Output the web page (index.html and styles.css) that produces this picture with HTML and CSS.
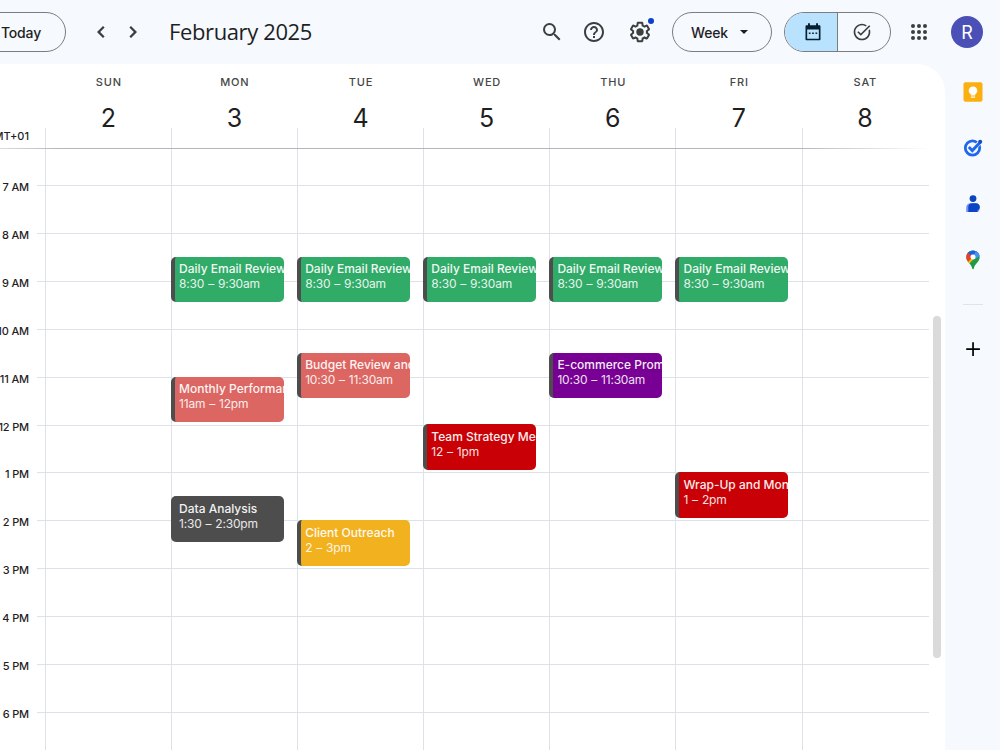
FILE: index.html
```
<!DOCTYPE html>
<html lang="en">
<head>
    <meta charset="UTF-8">
    <meta name="viewport" content="width=device-width, initial-scale=1.0">
    <title>Calendar - Week of February 2, 2025</title>
    <link rel="stylesheet" href="styles.css">
</head>
<body>
    <header class="topbar">
        <button type="button" class="pill today">Today</button>
        <button type="button" class="icon-button prev" aria-label="Previous week">
            <svg width="24" height="24" viewBox="0 0 24 24"><path d="M15.600 7.600 14 6l-6 6 6 6 1.600-1.600L11.200 12z"/></svg>
        </button>
        <button type="button" class="icon-button next" aria-label="Next week">
            <svg width="24" height="24" viewBox="0 0 24 24"><path d="M10 6 8.400 7.600l4.400 4.400-4.400 4.400L10 18l6-6z"/></svg>
        </button>
        <h1>February 2025</h1>

        <button type="button" class="icon-button search" aria-label="Search">
            <svg width="24" height="24" viewBox="0 0 24 24"><path d="M15.5 14h-.79l-.28-.27A6.47 6.47 0 0 0 16 9.5 6.5 6.5 0 1 0 9.5 16c1.61 0 3.09-.59 4.23-1.57l.27.28v.79l5 4.99L20.49 19l-4.99-5zm-6 0C7.01 14 5 11.99 5 9.5S7.01 5 9.5 5 14 7.01 14 9.5 11.99 14 9.5 14z"/></svg>
        </button>
        <button type="button" class="icon-button help" aria-label="Help">
            <svg width="24" height="24" viewBox="0 0 24 24"><path d="M11 18h2v-2h-2v2zm1-16C6.48 2 2 6.48 2 12s4.48 10 10 10 10-4.48 10-10S17.52 2 12 2zm0 18c-4.41 0-8-3.59-8-8s3.59-8 8-8 8 3.59 8 8-3.59 8-8 8zm0-14c-2.21 0-4 1.79-4 4h2c0-1.1.9-2 2-2s2 .9 2 2c0 2-3 1.75-3 5h2c0-2.25 3-2.5 3-5 0-2.21-1.79-4-4-4z"/></svg>
        </button>
        <button type="button" class="icon-button settings" aria-label="Settings">
            <svg width="24" height="24" viewBox="0 0 24 24"><path d="M13.85 22.25h-3.7c-.74 0-1.36-.54-1.45-1.27l-.27-1.89c-.27-.14-.53-.29-.79-.46l-1.8.72c-.7.26-1.47-.03-1.81-.65L2.2 15.53c-.35-.66-.2-1.44.36-1.88l1.53-1.19c-.01-.15-.02-.3-.02-.46s.01-.31.02-.46l-1.52-1.19c-.59-.45-.74-1.26-.37-1.88l1.85-3.19c.34-.62 1.11-.9 1.79-.63l1.81.73c.26-.17.52-.32.78-.46l.27-1.91c.09-.7.71-1.25 1.44-1.25h3.7c.74 0 1.36.54 1.45 1.27l.27 1.89c.27.14.53.29.79.46l1.8-.72c.71-.26 1.48.03 1.82.65l1.84 3.18c.36.66.2 1.44-.36 1.88l-1.52 1.19c.01.15.02.3.02.46s-.01.31-.02.46l1.52 1.19c.56.45.72 1.23.37 1.86l-1.86 3.22c-.34.62-1.11.9-1.8.63l-1.8-.72c-.26.17-.52.32-.78.46l-.27 1.91c-.1.68-.72 1.22-1.46 1.22zm-3.23-2h2.76l.37-2.55.53-.22c.44-.18.88-.44 1.34-.78l.45-.34 2.38.96 1.38-2.4-2.03-1.58.07-.56c.03-.26.06-.51.06-.78s-.03-.53-.06-.78l-.07-.56 2.03-1.58-1.39-2.4-2.39.96-.45-.35c-.42-.32-.87-.58-1.33-.77l-.52-.22-.37-2.55h-2.76l-.37 2.55-.53.21c-.44.19-.88.44-1.34.79l-.45.33-2.38-.95-1.39 2.39 2.03 1.58-.07.56a7 7 0 0 0-.06.79c0 .26.02.53.06.78l.07.56-2.03 1.58 1.38 2.4 2.39-.96.45.35c.43.33.86.58 1.33.77l.53.22.38 2.55z"/><circle cx="12" cy="12" r="3.7"/></svg>
            <span class="dot"></span>
        </button>
        <button type="button" class="pill view-select">Week <span class="caret"></span></button>
        <div class="switch">
            <button type="button" class="active" aria-label="Calendar">
                <svg width="20" height="20" viewBox="0 0 24 24"><path fill-rule="evenodd" d="M6 1.500h2.300V4h7.400V1.500H18V4h1.600c.8 0 1.400.6 1.400 1.400v15.200c0 .8-.6 1.400-1.400 1.400H4.400C3.600 22 3 21.400 3 20.600V5.400C3 4.600 3.600 4 4.400 4H6zM5 9v11h14V9zM7 12.500h2v2H7zM11 12.500h2v2h-2zM15 12.500h2v2h-2z"/></svg>
            </button>
            <button type="button" aria-label="Tasks">
                <svg width="20" height="20" viewBox="0 0 24 24"><path d="M22 5.180 10.590 16.600l-4.240-4.240 1.410-1.410 2.830 2.830 10-10zM19.790 10.220c.13.570.21 1.170.21 1.780 0 4.420-3.580 8-8 8s-8-3.580-8-8 3.580-8 8-8c1.580 0 3.040.46 4.280 1.250l1.440-1.440A9.900 9.900 0 0 0 12 2C6.480 2 2 6.480 2 12s4.480 10 10 10 10-4.480 10-10c0-1.190-.22-2.330-.6-3.390z"/></svg>
            </button>
        </div>
        <button type="button" class="icon-button apps" aria-label="Apps">
            <svg width="24" height="24" viewBox="0 0 24 24">
                <circle cx="6" cy="6" r="2"/><circle cx="12" cy="6" r="2"/><circle cx="18" cy="6" r="2"/>
                <circle cx="6" cy="12" r="2"/><circle cx="12" cy="12" r="2"/><circle cx="18" cy="12" r="2"/>
                <circle cx="6" cy="18" r="2"/><circle cx="12" cy="18" r="2"/><circle cx="18" cy="18" r="2"/>
            </svg>
        </button>
        <div class="avatar">R</div>
    </header>

    <div class="main">
        <main class="calendar">
            <div class="week-header">
                <div class="timezone"><span>GMT+01</span></div>
                <div class="day-head"><span class="name">SUN</span><span class="num">2</span></div>
                <div class="day-head"><span class="name">MON</span><span class="num">3</span></div>
                <div class="day-head"><span class="name">TUE</span><span class="num">4</span></div>
                <div class="day-head"><span class="name">WED</span><span class="num">5</span></div>
                <div class="day-head"><span class="name">THU</span><span class="num">6</span></div>
                <div class="day-head"><span class="name">FRI</span><span class="num">7</span></div>
                <div class="day-head"><span class="name">SAT</span><span class="num">8</span></div>
            </div>
            <div class="header-line"></div>

            <div class="scroller">
                <div class="week">
                    <div class="hours">
                        <div class="hour"><span>7 AM</span></div>
                        <div class="hour"><span>8 AM</span></div>
                        <div class="hour"><span>9 AM</span></div>
                        <div class="hour"><span>10 AM</span></div>
                        <div class="hour"><span>11 AM</span></div>
                        <div class="hour"><span>12 PM</span></div>
                        <div class="hour"><span>1 PM</span></div>
                        <div class="hour"><span>2 PM</span></div>
                        <div class="hour"><span>3 PM</span></div>
                        <div class="hour"><span>4 PM</span></div>
                        <div class="hour"><span>5 PM</span></div>
                        <div class="hour"><span>6 PM</span></div>
                    </div>
                    <div class="days">
                        <div class="day"></div>
                        <div class="day">
                            <div class="event green at-0830"><b>Daily Email Review</b><span>8:30 – 9:30am</span></div>
                            <div class="event coral at-1100"><b>Monthly Performance</b><span>11am – 12pm</span></div>
                            <div class="event gray at-1330"><b>Data Analysis</b><span>1:30 – 2:30pm</span></div>
                        </div>
                        <div class="day">
                            <div class="event green at-0830"><b>Daily Email Review</b><span>8:30 – 9:30am</span></div>
                            <div class="event coral at-1030"><b>Budget Review and</b><span>10:30 – 11:30am</span></div>
                            <div class="event yellow at-1400"><b>Client Outreach</b><span>2 – 3pm</span></div>
                        </div>
                        <div class="day">
                            <div class="event green at-0830"><b>Daily Email Review</b><span>8:30 – 9:30am</span></div>
                            <div class="event red at-1200"><b>Team Strategy Meeting</b><span>12 – 1pm</span></div>
                        </div>
                        <div class="day">
                            <div class="event green at-0830"><b>Daily Email Review</b><span>8:30 – 9:30am</span></div>
                            <div class="event purple at-1030"><b>E-commerce Promo</b><span>10:30 – 11:30am</span></div>
                        </div>
                        <div class="day">
                            <div class="event green at-0830"><b>Daily Email Review</b><span>8:30 – 9:30am</span></div>
                            <div class="event red at-1300"><b>Wrap-Up and Monthly</b><span>1 – 2pm</span></div>
                        </div>
                        <div class="day"></div>
                    </div>
                </div>
                <div class="scrollbar"></div>
            </div>
        </main>

        <aside class="side-panel">
            <!-- Keep -->
            <svg width="20" height="20" viewBox="0 0 20 20">
                <rect x=".5" y=".3" width="19" height="19.400" rx="2" fill="#fbb00f"/>
                <path fill="#fff" d="M10 4.500a4.200 4.200 0 0 0-2.200 7.800V13.500h4.400v-1.200A4.200 4.200 0 0 0 10 4.500zM7.900 14.500h4.200v1.300H7.900z"/>
            </svg>
            <!-- Tasks -->
            <svg width="20" height="20" viewBox="0 0 20 20" fill="none">
                <circle cx="9.500" cy="10" r="7.200" stroke="#1f68ee" stroke-width="2.800"/>
                <path d="m10 11.500 7-7.200" stroke="#f6f9fe" stroke-width="4.400"/>
                <path d="m5.800 9 3.500 3.500 8-8.300" stroke="#1f68ee" stroke-width="3"/>
                <circle cx="17.200" cy="3.700" r="2" fill="#164cc4"/>
            </svg>
            <!-- Contacts -->
            <svg width="20" height="20" viewBox="0 0 20 20">
                <circle cx="10" cy="4.600" r="3.400" fill="#0b44bd"/>
                <path fill="#7592f5" d="M3.200 18v-4.500C3.200 11 5 9.300 7.400 9.300h5.200c2.400 0 4.200 1.700 4.200 4.200 0 2.600-.8 4.500-3 4.500z"/>
                <path fill="#0b44c4" d="M5.300 18v-4.800c0-2.300 1.600-3.900 3.900-3.900h3.600c2.300 0 4 1.500 4 3.700 0 1.700-1 2.900-2.300 3.200V18z"/>
            </svg>
            <!-- Maps -->
            <svg class="maps" width="20" height="20" viewBox="0 0 20 20">
                <defs>
                    <clipPath id="pin"><path d="M10 .4a6.700 6.700 0 0 0-6.700 6.700c0 5.100 5 6.500 5.900 11.400.2 1.100 1.400 1.100 1.600 0 .9-4.900 5.900-6.300 5.900-11.400A6.700 6.700 0 0 0 10 .4z"/></clipPath>
                </defs>
                <g clip-path="url(#pin)">
                    <path fill="#1e9b45" d="M0 0h20v20H0z"/>
                    <path fill="#fbbc04" d="M10 7 0 9v9l5-3 8.500-9z"/>
                    <path fill="#e8402f" d="M10 7 4 13 0 9V0h3z"/>
                    <path fill="#1a62d6" d="M10 7 3.500 1.500 8-2l8 4-5 6z"/>
                    <path fill="#4b8df8" d="m10 7 3-6.500 6 4L12 9z"/>
                </g>
                <circle cx="10" cy="7.100" r="2.500" fill="#fff"/>
            </svg>
            <div class="divider"></div>
            <svg class="add" width="20" height="20" viewBox="0 0 20 20"><path d="M9.200 3.200h1.700v6h6v1.700h-6v6H9.200v-6h-6V9.200h6z"/></svg>
        </aside>
    </div>
</body>
</html>
```

FILE: styles.css
```
* {
    box-sizing: border-box;
}

body {
    margin: 0;
    height: 750px;
    overflow: hidden;
    display: flex;
    flex-direction: column;
    background-color: #f6f9fe;
    color: #1f1f1f;
    font-family: Inter, "Liberation Sans", sans-serif;
}

button {
    padding: 0;
    border: none;
    background: none;
    color: inherit;
    font-family: inherit;
}

svg {
    display: block;
}

/* Top bar */
.topbar {
    flex: none;
    display: flex;
    align-items: center;
    height: 64px;
    padding-right: 17px;
    fill: #3c3f3e;
}

.pill {
    display: flex;
    align-items: center;
    justify-content: center;
    height: 40px;
    border: 1px solid #7b7e7d;
    border-radius: 20px;
    font-size: 14px;
    font-weight: 500;
    letter-spacing: -0.15px;
}

.today {
    width: 91px;
    margin-left: -25px;
    padding-left: 1px;
}

.icon-button {
    display: flex;
    align-items: center;
    justify-content: center;
    width: 32px;
    height: 32px;
}

.prev {
    margin-left: 19px;
}

h1 {
    margin: -2px auto 0 20px;
    font-family: "Open Sans", Inter, sans-serif;
    font-size: 22px;
    font-weight: 400;
    letter-spacing: -0.38px;
}

.help {
    margin-left: 10px;
}

.settings {
    position: relative;
    margin-left: 14px;
}

.dot {
    position: absolute;
    top: 2px;
    right: 2px;
    width: 6px;
    height: 6px;
    border-radius: 50%;
    background-color: #0b41c9;
}

.view-select {
    width: 100px;
    margin-left: 16px;
    padding-right: 5px;
    gap: 12px;
}

.caret {
    border: 4px solid transparent;
    border-top-color: #1f1f1f;
    border-bottom: none;
}

.switch {
    display: flex;
    width: 107px;
    height: 40px;
    margin-left: 12px;
    border: 1px solid #7b7e7d;
    border-radius: 20px;
    overflow: hidden;
}

.switch button {
    flex: 1;
    display: flex;
    align-items: center;
    justify-content: center;
}

.switch .active {
    background-color: #b9e2ff;
    border-right: 1px solid #7b7e7d;
    padding-left: 4px;
    fill: #06202f;
}

.switch button:last-child {
    padding-right: 4px;
}

.apps {
    margin-left: 12px;
}

.avatar {
    width: 32px;
    height: 32px;
    margin-left: 16px;
    border-radius: 50%;
    background-color: #4a50b5;
    color: #fff;
    font-size: 18px;
    line-height: 33px;
    text-align: center;
}

/* Calendar card */
.main {
    flex: 1;
    display: flex;
    min-height: 0;
}

.calendar {
    width: 945px;
    background-color: #fff;
    border-top-right-radius: 28px;
    overflow: hidden;
}

.week-header {
    display: flex;
    height: 84px;
}

.timezone {
    width: 45px;
    padding: 64px 16px 0 0;
    display: flex;
    justify-content: flex-end;
    font-size: 11px;
    font-weight: 500;
    line-height: 16px;
}

.day-head {
    width: 126.1px;
    padding-left: 0.5px;
    display: flex;
    flex-direction: column;
    align-items: center;
    background: linear-gradient(#dde1e8, #dde1e8) 0 64px / 1px 20px no-repeat;
}

.name {
    margin-top: 10px;
    padding-left: 1px;
    font-size: 11px;
    font-weight: 500;
    line-height: 16px;
    letter-spacing: 0.8px;
    color: #444746;
}

.num {
    margin-top: 11px;
    font-size: 25px;
    line-height: 34px;
}

.header-line {
    width: 929px;
    height: 1px;
    background: linear-gradient(to right, #dcdcde, #b5b6b9 60px, #b5b6b9 800px, #fff);
}

.scroller {
    display: flex;
    height: 601px;
}

/* Hour lines and day columns share one cell */
.week {
    display: grid;
    width: 929px;
}

.hours,
.days {
    grid-area: 1 / 1;
    min-width: 0;
}

.hours {
    padding-top: 36px;
}

.hour {
    display: flex;
    height: 47.92px;
}

.hour span {
    width: 29px;
    margin: -6px 8px 0 0;
    display: flex;
    justify-content: flex-end;
    white-space: nowrap;
    font-size: 11px;
    font-weight: 500;
    line-height: 16px;
    letter-spacing: -0.15px;
}

.hour::after {
    content: "";
    flex: 1;
    border-top: 1px solid #dde1e8;
}

.days {
    display: flex;
    padding-left: 45px;
}

/* Half-hour rows, the first one holds what is left of 6 AM */
.day {
    width: 126.1px;
    display: grid;
    grid-template-rows: 35.9px repeat(24, 23.96px);
    border-left: 1px solid #dde1e8;
}

.event {
    width: 113px;
    height: 45.6px;
    margin-left: -1px;
    padding: 4.500px 0 0 4px;
    border-left: 4px solid #4d4d4d;
    border-radius: 5px;
    overflow: hidden;
    white-space: nowrap;
    color: #fff;
    font-size: 12px;
    line-height: 15px;
}

.event b,
.event span {
    display: block;
}

.event b {
    font-weight: 500;
    opacity: 0.93;
}

.event span {
    opacity: 0.88;
    letter-spacing: -0.2px;
    word-spacing: 0.8px;
}

.at-0830 { grid-row: 5; }
.at-1030 { grid-row: 9; }
.at-1100 { grid-row: 10; }
.at-1200 { grid-row: 12; }
.at-1300 { grid-row: 14; }
.at-1330 { grid-row: 15; }
.at-1400 { grid-row: 16; }

.green { background-color: #30ab68; }
.coral { background-color: #dc6661; }
.gray { background-color: #4d4d4d; }
.yellow { background-color: #f2b21f; }
.red { background-color: #c90005; }
.purple { background-color: #780094; }

.scrollbar {
    width: 8px;
    height: 342px;
    margin: 167px 0 0 4px;
    border-radius: 4px;
    background-color: #dadada;
}

/* Side panel */
.side-panel {
    flex: 1;
    display: flex;
    flex-direction: column;
    align-items: center;
    gap: 36px;
    padding-top: 18px;
}

.divider {
    width: 20px;
    height: 1px;
    margin-top: -2px;
    background-color: #e0e3e8;
}

.add {
    margin-top: -2px;
}
```
